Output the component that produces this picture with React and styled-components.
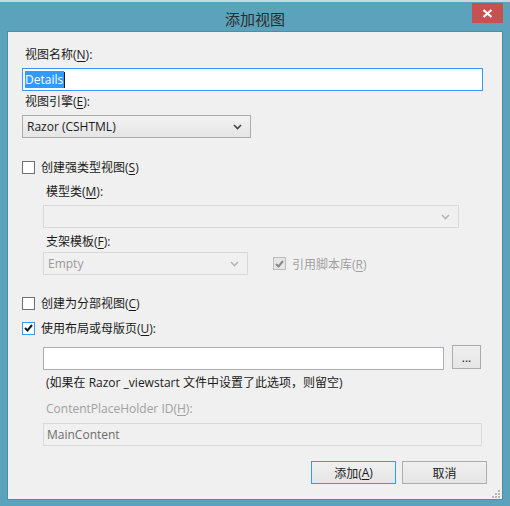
import React from "react";
import styled, { createGlobalStyle, css } from "styled-components";

const FONT = `"Open Sans", "Noto Sans CJK SC", sans-serif`;

const GlobalStyle = createGlobalStyle`
  html, body {
    margin: 0;
    padding: 0;
  }
  body {
    width: 510px;
    height: 506px;
    overflow: hidden;
    background: #5ba3bc;
    font-family: ${FONT};
    font-size: 12px;
    color: #1a1a1a;
  }
`;

const Window = styled.div`
  width: 510px;
  height: 506px;
  box-sizing: border-box;
  border-top: 2px solid #ccd8dc;
  background: #5ba3bc;
  padding: 0 7px 6px 7px;
  display: flex;
  flex-direction: column;
`;

const TitleBar = styled.div`
  height: 29px;
  display: grid;
  grid-template-columns: 1fr auto 1fr;
  align-items: start;
`;

const Title = styled.div`
  grid-column: 2;
  font-size: 15px;
  line-height: 20px;
  padding-top: 7px;
  color: #2b2b2b;
`;

const CloseButton = styled.div`
  grid-column: 3;
  justify-self: end;
  width: 31px;
  height: 20px;
  margin-top: 1px;
  background: #c75050;
  display: flex;
  align-items: center;
  justify-content: center;
`;

const Client = styled.div`
  position: relative;
  flex: 1;
  background: #f0f0f0;
  border: 1px solid #4d8ea5;
  padding: 15px 19px 0 14px;
  display: flex;
  flex-direction: column;
`;

const Label = styled.div`
  line-height: 16px;
  height: 16px;
  padding-left: 3px;
  white-space: nowrap;
  margin-top: ${(p) => p.$mt || 0}px;
  color: ${(p) => (p.$disabled ? "#a0a0a0" : "#1a1a1a")};
  u {
    text-decoration-thickness: 1px;
    text-underline-offset: 2px;
  }
`;

const boxBase = css`
  box-sizing: border-box;
  height: 23px;
  display: flex;
  align-items: center;
  flex-shrink: 0;
`;

const TextBox = styled.div`
  ${boxBase};
  width: ${(p) => p.$w}px;
  height: ${(p) => p.$h || 23}px;
  margin-top: ${(p) => p.$mt || 0}px;
  padding-left: ${(p) => p.$pl || 3}px;
  background: ${(p) => (p.$disabled ? "#f0f0f0" : "#fff")};
  border: 1px solid
    ${(p) => (p.$focused ? "#3399ff" : p.$disabled ? "#d9d9d9" : "#abadb3")};
  color: ${(p) => (p.$disabled ? "#6d6d6d" : "#1a1a1a")};
`;

const Selected = styled.span`
  background: #3399ff;
  color: #fff;
  line-height: 17px;
  padding: 0 1px 0 0;
`;

const Caret = styled.span`
  display: inline-block;
  width: 1px;
  height: 16px;
  background: #1a1a1a;
`;

const Select = styled.div`
  ${boxBase};
  width: ${(p) => p.$w}px;
  margin-top: ${(p) => p.$mt || 0}px;
  padding: 0 8px 0 4px;
  justify-content: space-between;
  border: 1px solid ${(p) => (p.$disabled ? "#d9d9d9" : "#acacac")};
  background: ${(p) =>
    p.$disabled ? "#f0f0f0" : "linear-gradient(#f2f2f2, #e5e5e5)"};
  color: ${(p) => (p.$disabled ? "#9a9a9a" : "#1a1a1a")};
`;

const Chevron = ({ color }) => (
  <svg width="9" height="6" viewBox="0 0 9 6">
    <polyline points="1,1 4.5,4.5 8,1" fill="none" stroke={color} strokeWidth="1.6" />
  </svg>
);

const CheckRow = styled.div`
  display: flex;
  align-items: center;
  gap: 6px;
  height: 16px;
  margin-top: ${(p) => p.$mt || 0}px;
  color: ${(p) => (p.$disabled ? "#a0a0a0" : "#1a1a1a")};
  white-space: nowrap;
  u {
    text-underline-offset: 2px;
  }
`;

const Box = styled.div`
  box-sizing: border-box;
  width: 13px;
  height: 13px;
  flex-shrink: 0;
  border: 1px solid
    ${(p) => (p.$focused ? "#3399ff" : p.$disabled ? "#bcbcbc" : "#707070")};
  background: ${(p) => (p.$disabled ? "#e6e6e6" : "#fff")};
  display: flex;
  align-items: center;
  justify-content: center;
`;

const Check = ({ color }) => (
  <svg width="9" height="8" viewBox="0 0 9 8">
    <polyline points="1,4 3.5,6.5 8,1" fill="none" stroke={color} strokeWidth="2" />
  </svg>
);

const Checkbox = ({ checked, focused, disabled, children, mt }) => (
  <CheckRow $mt={mt} $disabled={disabled}>
    <Box $focused={focused} $disabled={disabled}>
      {checked && <Check color={disabled ? "#8a8a8a" : "#1a1a1a"} />}
    </Box>
    <span>{children}</span>
  </CheckRow>
);

const Indent = styled.div`
  display: flex;
  flex-direction: column;
  padding-left: 21px;
`;

const Row = styled.div`
  display: flex;
  align-items: ${(p) => p.$align || "center"};
  margin-top: ${(p) => p.$mt || 0}px;
  gap: ${(p) => p.$gap || 0}px;
`;

const Button = styled.div`
  box-sizing: border-box;
  width: ${(p) => p.$w || 85}px;
  height: ${(p) => p.$h || 23}px;
  margin-top: ${(p) => p.$mt || 0}px;
  border: 1px solid ${(p) => (p.$default ? "#3399ff" : "#acacac")};
  background: linear-gradient(#f0f0f0, #e5e5e5);
  display: flex;
  align-items: center;
  justify-content: center;
  color: #1a1a1a;
  u {
    text-underline-offset: 2px;
  }
`;

const Footer = styled.div`
  display: flex;
  justify-content: flex-end;
  gap: 6px;
  margin-top: 15px;
  margin-right: -4px;
`;

const Grip = styled.svg`
  position: absolute;
  right: 2px;
  bottom: 1px;
`;

export default function App() {
  return (
    <>
      <GlobalStyle />
      <Window>
        <TitleBar>
          <Title>添加视图</Title>
          <CloseButton>
            <svg width="11" height="9" viewBox="0 0 11 9">
              <path d="M1.5 1 L9.5 8 M9.5 1 L1.5 8" stroke="#fff" strokeWidth="2.2" />
            </svg>
          </CloseButton>
        </TitleBar>
        <Client>
          <Label>
            视图名称(<u>N</u>):
          </Label>
          <TextBox $w={461} $mt={5} $focused $pl={2}>
            <Selected>Details</Selected>
            <Caret />
          </TextBox>
          <Label $mt={3}>
            视图引擎(<u>E</u>):
          </Label>
          <Select $w={229} $mt={5}>
            <span>Razor (CSHTML)</span>
            <Chevron color="#444" />
          </Select>

          <Checkbox mt={21}>
            创建强类型视图(<u>S</u>)
          </Checkbox>
          <Indent>
            <Label $mt={9}>
              模型类(<u>M</u>):
            </Label>
            <Select $w={416} $mt={5} $disabled>
              <span />
              <Chevron color="#b5b5b5" />
            </Select>
            <Label $mt={6}>
              支架模板(<u>F</u>):
            </Label>
            <Row $mt={2} $gap={25}>
              <Select $w={205} $disabled>
                <span>Empty</span>
                <Chevron color="#b5b5b5" />
              </Select>
              <Checkbox checked disabled>
                引用脚本库(<u>R</u>)
              </Checkbox>
            </Row>
          </Indent>

          <Checkbox mt={20}>
            创建为分部视图(<u>C</u>)
          </Checkbox>
          <Checkbox mt={9} checked focused>
            使用布局或母版页(<u>U</u>):
          </Checkbox>
          <Indent>
            <Row $mt={9} $align="flex-start" $gap={8}>
              <TextBox $w={401} $mt={2} />
              <Button $w={29} $h={24}>
                ...
              </Button>
            </Row>
            <Label $mt={5}>(如果在 Razor _viewstart 文件中设置了此选项，则留空)</Label>
            <Label $mt={10} $disabled>
              ContentPlaceHolder ID(<u>H</u>):
            </Label>
            <TextBox $w={439} $mt={6} $disabled>
              MainContent
            </TextBox>
          </Indent>

          <Footer>
            <Button $default>
              添加(<u>A</u>)
            </Button>
            <Button>取消</Button>
          </Footer>
          <Grip width="8" height="8" viewBox="0 0 8 8">
            <g fill="#b8b8b8">
              <rect x="6" y="0" width="2" height="2" />
              <rect x="3" y="3" width="2" height="2" />
              <rect x="6" y="3" width="2" height="2" />
              <rect x="0" y="6" width="2" height="2" />
              <rect x="3" y="6" width="2" height="2" />
              <rect x="6" y="6" width="2" height="2" />
            </g>
          </Grip>
        </Client>
      </Window>
    </>
  );
}
